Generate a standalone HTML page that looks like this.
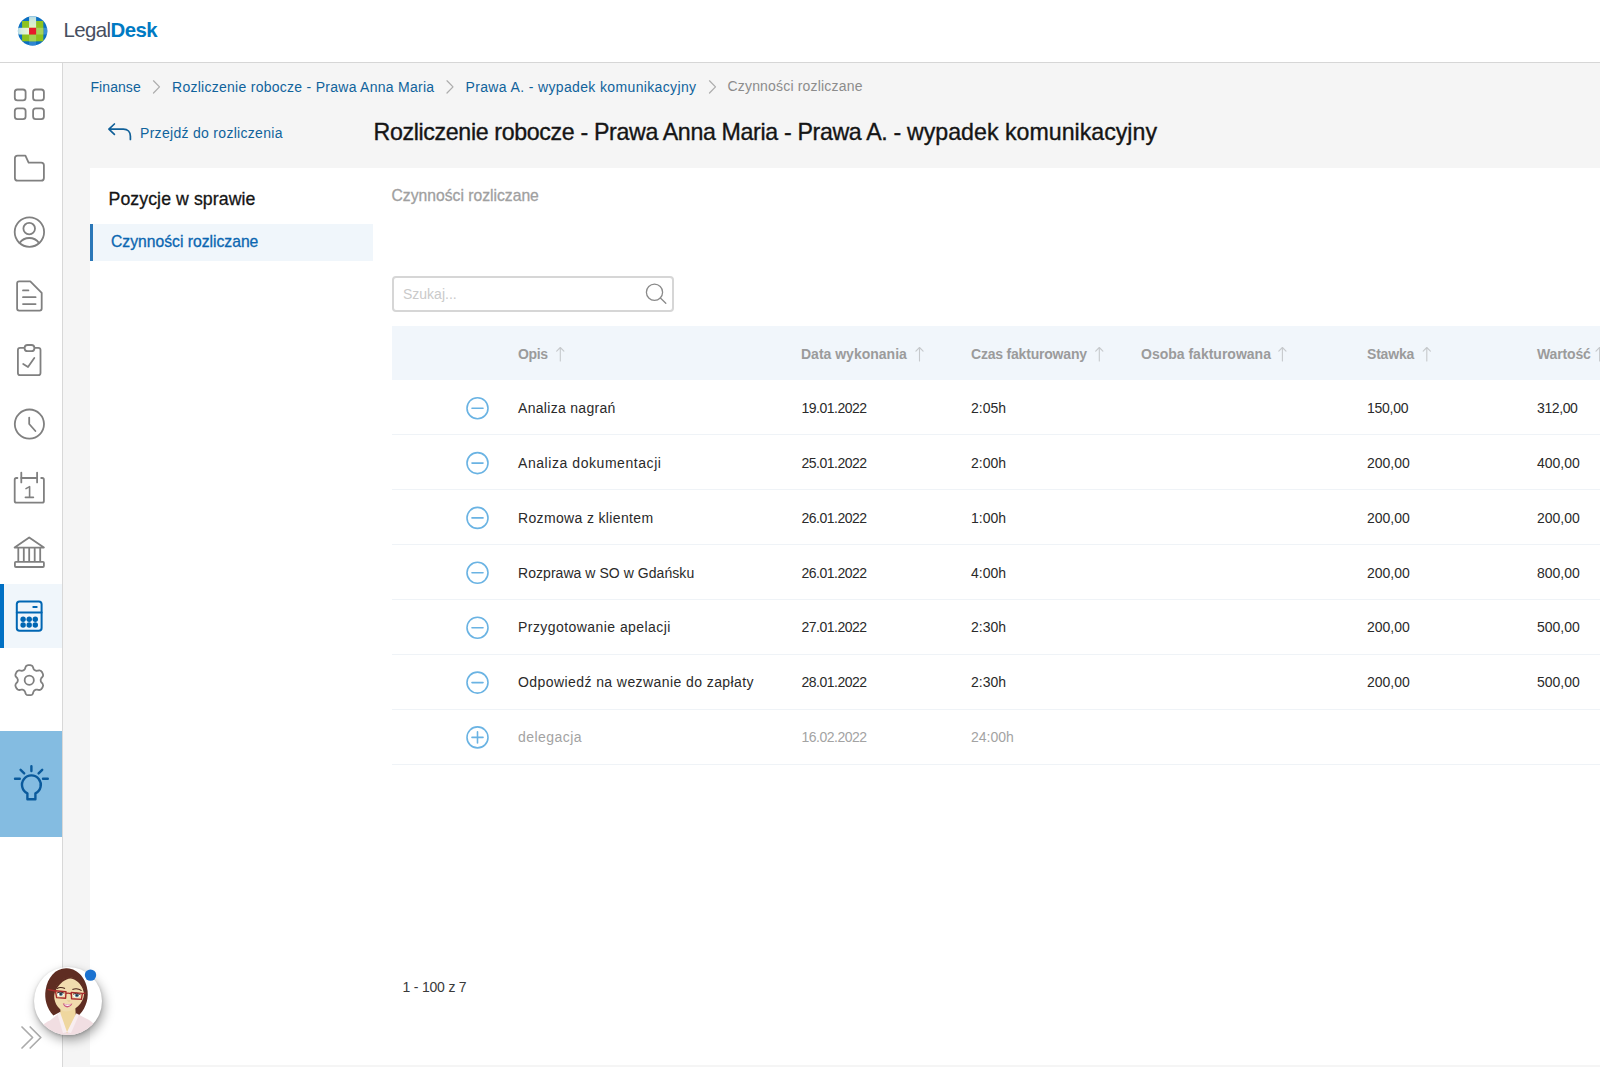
<!DOCTYPE html>
<html lang="pl">
<head>
<meta charset="utf-8">
<title>LegalDesk - Czynności rozliczane</title>
<style>
*{box-sizing:border-box;margin:0;padding:0}
html,body{width:1600px;height:1067px;overflow:hidden;background:#f5f5f5;font-family:"Liberation Sans",sans-serif;color:#232323}
.abs{position:absolute}
#t1{letter-spacing:-0.348px}#t2{letter-spacing:0}
#header{position:absolute;left:0;top:0;width:1600px;height:63px;background:#fff;border-bottom:1px solid #d6d6d6}
#logo-text{position:absolute;left:63.5px;top:16.5px;font-size:20.4px;line-height:26px;color:#474f5f;white-space:nowrap;letter-spacing:-0.57px}
#logo-text b{color:#007ac3;font-weight:bold}
#sidebar{position:absolute;left:0;top:63px;width:63px;height:1004px;background:#fff;border-right:1px solid #d8d8d8}
.nav-ic{position:absolute;left:0;width:61px;height:64px}
.nav-ic svg{position:absolute;left:0;top:0}
.nav-ic.active{background:#eef5fb;border-left:4px solid #0069b4}
#bulb{position:absolute;left:0;top:731px;width:62px;height:106px;background:#84bce1}
#crumbs{position:absolute;left:90px;top:77px;height:20px;font-size:14px;line-height:20px;color:#10639c;white-space:nowrap}
#crumbs span{position:absolute;top:0}
#crumbs .sep{color:#a0a0a0}
#crumbs .cur{color:#8c8c8c}
#back{position:absolute;left:140px;top:123px;font-size:14px;line-height:20px;letter-spacing:0.3px;color:#10639c;white-space:nowrap}
#title{position:absolute;left:373.5px;top:116px;font-size:23.2px;line-height:32px;color:#151515;white-space:nowrap;font-weight:normal;-webkit-text-stroke:0.35px #151515}
#panel{position:absolute;left:90px;top:168px;width:1510px;height:897px;background:#fff}
#side-h{position:absolute;left:18.5px;top:19px;font-size:17.7px;line-height:24px;letter-spacing:0.09px;color:#151515;white-space:nowrap;-webkit-text-stroke:0.3px #151515}
#side-item{position:absolute;left:0;top:56px;width:283px;height:37px;background:#f0f6fb;border-left:3px solid #2a77b8;color:#0b66b1;font-size:15.7px;line-height:36px;padding-left:18px;white-space:nowrap;-webkit-text-stroke:0.3px #0b66b1}
#sec-h{position:absolute;left:301.5px;top:17px;font-size:15.7px;line-height:22px;color:#a0a0a0;white-space:nowrap;-webkit-text-stroke:0.3px #a0a0a0}
#search{position:absolute;left:302px;top:108px;width:282px;height:36px;border:2px solid #d6d6d6;border-radius:4px;background:#fff}
#search span{position:absolute;left:9px;top:6px;font-size:14px;line-height:20px;color:#cacaca}
#thead{position:absolute;left:302px;top:158px;width:1208px;height:54px;background:#f1f6fb}
.th{position:absolute;top:18px;font-size:14px;line-height:20px;font-weight:bold;color:#9b9b9b;white-space:nowrap}
.row{position:absolute;left:302px;width:1208px;height:55px;border-bottom:1px solid #eff3f7}
.row span{position:absolute;top:18px;font-size:14px;line-height:20px;color:#2a2a2a;white-space:nowrap}
.row.dim span{color:#a3a3a3}
.row.up span{top:17px}
.c1{left:126px}.c2{left:409px}.c3{left:579px}.c4{left:749px}.c5{left:975px}.c6{left:1145px}
.row .c2{letter-spacing:-0.5px;left:409.5px}
.row svg{position:absolute;left:73px;top:15px}
#pager{position:absolute;left:312.5px;top:809px;font-size:14px;line-height:20px;letter-spacing:-0.2px;color:#3a3a3a;white-space:nowrap}
</style>
</head>
<body>
<div id="header">
  <svg class="abs" style="left:0;top:0" width="64" height="62" viewBox="0 0 64 62">
    <defs><clipPath id="lc"><circle cx="32.6" cy="30.9" r="14.7"/></clipPath>
    <linearGradient id="lgv" x1="0" y1="0" x2="0" y2="1"><stop offset="0" stop-color="#9fd0f2"/><stop offset="0.45" stop-color="#cfe9d8"/><stop offset="1" stop-color="#e4f3c4"/></linearGradient>
    <linearGradient id="lgh" x1="0" y1="0" x2="1" y2="0"><stop offset="0" stop-color="#9fd0f2"/><stop offset="0.4" stop-color="#d6ecdc"/><stop offset="1" stop-color="#eef6d6"/></linearGradient></defs>
    <g clip-path="url(#lc)">
      <rect x="16" y="14" width="34" height="34" fill="#0b6fc2"/>
      <rect x="43.3" y="27.8" width="6" height="6.7" fill="#3b8fd6"/>
      <rect x="29.1" y="41.3" width="7" height="6" fill="#2f86d2"/>
      <rect x="22.1" y="21" width="21.2" height="20.3" fill="#8dc21f"/>
      <rect x="29.1" y="14" width="7" height="13.8" fill="url(#lgv)"/>
      <rect x="16" y="27.8" width="13.1" height="6.7" fill="url(#lgh)"/>
      <rect x="36.1" y="27.8" width="7.2" height="6.7" fill="#a6d25c"/>
      <rect x="29.1" y="34.5" width="7" height="6.8" fill="#a2d456"/>
      <rect x="29.1" y="27.8" width="7" height="6.7" fill="#e81a2b"/>
    </g>
  </svg>
  <div id="logo-text"><span id="lg1">Legal</span><b id="lg2">Desk</b></div>
</div>

<div id="sidebar"></div>
<div class="abs" style="left:0;top:584px;width:62px;height:64px;background:#f0f6fb"></div>
<div class="abs" style="left:0;top:584px;width:4px;height:64px;background:#0070c4"></div>
<div id="bulb"></div>
<svg class="abs" style="left:0;top:63px" width="63" height="1004" viewBox="0 63 63 1004" fill="none" stroke="#808080" stroke-width="1.8" stroke-linecap="round" stroke-linejoin="round">
  <!-- dashboard -->
  <rect x="14.8" y="89.5" width="10.8" height="10.8" rx="2.6"/><rect x="33.1" y="89.5" width="10.8" height="10.8" rx="2.6"/>
  <rect x="14.8" y="108.3" width="10.8" height="10.8" rx="2.6"/><rect x="33.1" y="108.3" width="10.8" height="10.8" rx="2.6"/>
  <!-- folder -->
  <path d="M17.6 155.6H25.4L28.6 162.6H41.2Q43.9 162.6 43.9 165.3V177.9Q43.9 180.6 41.2 180.6H17.6Q14.9 180.6 14.9 177.9V158.3Q14.9 155.6 17.6 155.6Z"/>
  <!-- user -->
  <circle cx="29.4" cy="232.1" r="14.7"/><circle cx="29.2" cy="228.6" r="5.8"/>
  <path d="M19.6 243C22 239.6 25.4 238 29.3 238S36.6 239.6 39 243"/>
  <!-- document -->
  <path d="M19.1 281.3H30.3L41.7 292.8V308.6Q41.7 310.6 39.7 310.6H19.1Q17.1 310.6 17.1 308.6V283.3Q17.1 281.3 19.1 281.3Z"/>
  <path d="M23 290.4H28.4M23 297.2H35.6M23 304.1H35.6"/>
  <!-- clipboard -->
  <rect x="17.9" y="347.8" width="22.6" height="27.3" rx="2.2"/>
  <rect x="24.6" y="345" width="9.8" height="6.2" rx="3" fill="#fff"/>
  <path d="M23.2 364L28 367L34.3 358"/>
  <!-- clock -->
  <circle cx="29.4" cy="424.1" r="14.6"/><path d="M29.2 417.6V424L35.4 431"/>
  <!-- calendar -->
  <path d="M21.3 478H37.1M17.4 478H16.4Q14.7 478 14.7 479.7V501Q14.7 502.7 16.4 502.7H42.2Q43.9 502.7 43.9 501V479.7Q43.9 478 42.2 478H41.2"/>
  <path d="M21.3 472.6V482.4M37.1 472.6V482.4"/>
  <path d="M26 488.6L29.6 486.6V497.4M25.4 497.4H33.4" stroke-width="1.6"/>
  <!-- bank -->
  <path d="M14.6 547.6L29.2 537.4L43.9 547.6Z"/>
  <path d="M18.3 548.5V561M23.8 548.5V561M29.2 548.5V561M34.7 548.5V561M40.2 548.5V561"/>
  <rect x="14.9" y="561.8" width="29" height="5.2" rx="1"/>
  <!-- calculator (active) -->
  <g stroke="#0066b3" stroke-width="2">
    <rect x="16.8" y="601.5" width="24.8" height="29.3" rx="2.8"/>
    <path d="M16.8 612.6H41.6M33.3 607H36.7"/>
    <g fill="#0066b3" stroke="none">
      <circle cx="23.1" cy="619.2" r="2.7"/><circle cx="29.2" cy="619.2" r="2.7"/><circle cx="35.3" cy="619.2" r="2.7"/>
      <circle cx="23.1" cy="625" r="2.7"/><circle cx="29.2" cy="625" r="2.7"/><circle cx="35.3" cy="625" r="2.7"/>
    </g>
  </g>
  <!-- settings -->
  <circle cx="29.25" cy="680.2" r="4.6"/>
  <path d="M29.2 665.2 L29.6 665.2 L30.0 665.2 L30.4 665.2 L30.8 665.3 L31.2 665.4 L31.6 665.5 L31.9 665.7 L32.3 666.0 L32.6 666.4 L32.8 666.8 L33.1 667.4 L33.2 667.9 L33.4 668.4 L33.6 668.9 L33.8 669.2 L34.0 669.5 L34.2 669.8 L34.5 670.0 L34.7 670.1 L35.0 670.3 L35.2 670.4 L35.5 670.6 L35.8 670.7 L36.1 670.7 L36.5 670.8 L36.9 670.8 L37.4 670.7 L37.9 670.6 L38.5 670.5 L39.0 670.4 L39.6 670.4 L40.0 670.5 L40.4 670.7 L40.8 670.9 L41.1 671.1 L41.4 671.4 L41.6 671.7 L41.9 672.0 L42.1 672.3 L42.3 672.7 L42.5 673.0 L42.6 673.4 L42.8 673.7 L42.9 674.1 L43.0 674.5 L43.1 674.9 L43.1 675.3 L43.0 675.7 L42.9 676.2 L42.6 676.6 L42.3 677.1 L41.9 677.5 L41.5 677.9 L41.2 678.3 L41.0 678.6 L40.9 679.0 L40.8 679.3 L40.7 679.6 L40.7 679.9 L40.7 680.2 L40.7 680.5 L40.7 680.8 L40.8 681.1 L40.9 681.4 L41.0 681.8 L41.2 682.1 L41.5 682.5 L41.9 682.9 L42.3 683.3 L42.6 683.8 L42.9 684.2 L43.0 684.7 L43.1 685.1 L43.1 685.5 L43.0 685.9 L42.9 686.3 L42.8 686.7 L42.6 687.0 L42.5 687.4 L42.3 687.7 L42.1 688.1 L41.9 688.4 L41.6 688.7 L41.4 689.0 L41.1 689.3 L40.8 689.5 L40.4 689.7 L40.0 689.9 L39.6 690.0 L39.0 690.0 L38.5 689.9 L37.9 689.8 L37.4 689.7 L36.9 689.6 L36.5 689.6 L36.1 689.7 L35.8 689.7 L35.5 689.8 L35.2 690.0 L35.0 690.1 L34.7 690.3 L34.5 690.4 L34.2 690.6 L34.0 690.9 L33.8 691.2 L33.6 691.5 L33.4 692.0 L33.2 692.5 L33.1 693.0 L32.8 693.6 L32.6 694.0 L32.3 694.4 L31.9 694.7 L31.6 694.9 L31.2 695.0 L30.8 695.1 L30.4 695.2 L30.0 695.2 L29.6 695.2 L29.3 695.2 L28.9 695.2 L28.5 695.2 L28.1 695.2 L27.7 695.1 L27.3 695.0 L26.9 694.9 L26.6 694.7 L26.2 694.4 L25.9 694.0 L25.7 693.6 L25.4 693.0 L25.3 692.5 L25.1 692.0 L24.9 691.5 L24.7 691.2 L24.5 690.9 L24.3 690.6 L24.0 690.4 L23.8 690.3 L23.5 690.1 L23.3 690.0 L23.0 689.8 L22.7 689.7 L22.4 689.7 L22.0 689.6 L21.6 689.6 L21.1 689.7 L20.6 689.8 L20.0 689.9 L19.5 690.0 L18.9 690.0 L18.5 689.9 L18.1 689.7 L17.7 689.5 L17.4 689.3 L17.1 689.0 L16.9 688.7 L16.6 688.4 L16.4 688.1 L16.2 687.7 L16.0 687.4 L15.9 687.0 L15.7 686.7 L15.6 686.3 L15.5 685.9 L15.4 685.5 L15.4 685.1 L15.5 684.7 L15.6 684.2 L15.9 683.8 L16.2 683.3 L16.6 682.9 L17.0 682.5 L17.3 682.1 L17.5 681.8 L17.6 681.4 L17.7 681.1 L17.8 680.8 L17.8 680.5 L17.8 680.2 L17.8 679.9 L17.8 679.6 L17.7 679.3 L17.6 679.0 L17.5 678.6 L17.3 678.3 L17.0 677.9 L16.6 677.5 L16.2 677.1 L15.9 676.6 L15.6 676.2 L15.5 675.7 L15.4 675.3 L15.4 674.9 L15.5 674.5 L15.6 674.1 L15.7 673.7 L15.9 673.4 L16.0 673.0 L16.2 672.7 L16.4 672.3 L16.6 672.0 L16.9 671.7 L17.1 671.4 L17.4 671.1 L17.7 670.9 L18.1 670.7 L18.5 670.5 L18.9 670.4 L19.5 670.4 L20.0 670.5 L20.6 670.6 L21.1 670.7 L21.6 670.8 L22.0 670.8 L22.4 670.7 L22.7 670.7 L23.0 670.6 L23.3 670.4 L23.5 670.3 L23.8 670.1 L24.0 670.0 L24.3 669.8 L24.5 669.5 L24.7 669.2 L24.9 668.9 L25.1 668.4 L25.3 667.9 L25.4 667.4 L25.7 666.8 L25.9 666.4 L26.2 666.0 L26.6 665.7 L26.9 665.5 L27.3 665.4 L27.7 665.3 L28.1 665.2 L28.5 665.2 L28.9 665.2Z"/>
  <!-- bulb -->
  <g stroke="#0a5a9c" stroke-width="2.4">
    <path d="M27.4 793.3A9.4 9.4 0 1 1 35.4 793.3V799.2H27.4Z"/>
    <path d="M31.4 766.2V771M15 778.7H19.8M43 778.7H47.8M20.6 769.8L24.2 773.4M42.2 769.8L38.6 773.4"/>
  </g>
  <!-- expand chevrons -->
  <path d="M22 1027L32.6 1037.5L22 1048M30.2 1027L40.8 1037.5L30.2 1048" stroke="#ababab" stroke-width="1.7"/>
</svg>

<svg class="abs" style="left:63px;top:63px;z-index:5;pointer-events:none" width="1537" height="1004" viewBox="63 63 1537 1004" fill="none" stroke-linecap="round" stroke-linejoin="round">
  <g stroke="#adadad" stroke-width="1.25"><path d="M153.5 80.8L159.5 86.9L153.5 93"/><path d="M447 80.8L453 86.9L447 93"/><path d="M709.5 80.8L715.5 86.9L709.5 93"/></g>
  <path d="M114.4 124L108.9 129.1L114.4 134.3M108.9 129.1H123.4C127.6 129.1 130.4 132 130.4 136.2V139.5" stroke="#0f5f98" stroke-width="1.7"/>
  <g stroke="#8a8a8a" stroke-width="1.3"><circle cx="654.5" cy="292.3" r="8.1"/><path d="M660.4 298L665.8 303.2"/></g>
  <g stroke="#c6c9cc" stroke-width="1.1"><path d="M560.3 361V347.5M556.69 351.2L560.3 347.5L563.9 351.2"/><path d="M919.5 361V347.5M915.9 351.2L919.5 347.5L923.1 351.2"/><path d="M1099.3 361V347.5M1095.7 351.2L1099.3 347.5L1102.89 351.2"/><path d="M1282.4 361V347.5M1278.80 351.2L1282.4 347.5L1286.0 351.2"/><path d="M1426.8 361V347.5M1423.2 351.2L1426.8 347.5L1430.39 351.2"/><path d="M1599.6 361V347.5M1596 351.2L1599.6 347.5L1603.2 351.2"/></g>
  <g stroke="#6ab3e3" stroke-width="1.6"><circle cx="477.5" cy="408.2" r="10.5"/><path d="M472 408.2H483"/><circle cx="477.5" cy="463.1" r="10.5"/><path d="M472 463.1H483"/><circle cx="477.5" cy="517.9" r="10.5"/><path d="M472 517.9H483"/><circle cx="477.5" cy="572.8" r="10.5"/><path d="M472 572.8H483"/><circle cx="477.5" cy="627.7" r="10.5"/><path d="M472 627.7H483"/><circle cx="477.5" cy="682.6" r="10.5"/><path d="M472 682.6H483"/><circle cx="477.5" cy="737.4" r="10.5"/><path d="M472 737.4H483"/><path d="M477.5 731.9V742.9"/></g>
</svg>
<div class="abs" style="left:34px;top:967px;width:68px;height:68px;border-radius:50%;background:#fff;box-shadow:2px 5px 11px rgba(0,0,0,0.36),0 1px 3px rgba(0,0,0,0.18);z-index:6"></div>
<svg class="abs" style="left:30px;top:960px;z-index:7" width="80" height="90" viewBox="30 960 80 90">
  <defs><clipPath id="avc"><circle cx="68" cy="1001" r="34"/></clipPath></defs>
  <g clip-path="url(#avc)">
    <!-- hair back -->
    <path d="M67 968.2C56 967.6 47.6 977 45.6 990C44.2 999 46.6 1008 53.4 1015.6L60 1012L77 1017.2C84.6 1010.6 88.6 1001 87.6 991C86.6 979.6 78.6 968.8 67 968.2Z" fill="#5f2d22"/>
    <!-- shirt -->
    <path d="M36 1040C37 1030 42 1024 50 1020.6L60 1012.4L67 1031.8L76.4 1013.2L86 1018.6C93 1021.4 98 1027 100 1040Z" fill="#f1dee2"/>
    <!-- neck -->
    <path d="M60.6 1006L60.2 1014.6L67 1033.4L75.8 1015L75 1004Z" fill="#efd79f"/>
    <path d="M60.3 1013L67 1032L63 1033L57.6 1014.6Z" fill="#f8eef0"/>
    <path d="M76 1014L67 1032L71 1033L78.8 1015.2Z" fill="#f8eef0"/>
    <!-- face -->
    <path d="M69.4 977.6C61 977.8 54.6 985.6 54.2 996C54 1003.6 59.4 1011.4 66.4 1011.6C74.6 1011.4 83.4 1003.4 84 994.6C84.4 985.6 77.6 977.6 69.4 977.6Z" fill="#f1dcae"/>
    <!-- hair fringe -->
    <path d="M70 977C62.6 976.6 55 982.6 53.4 995.4C55.4 989.6 58.6 985 62.6 981.8C65.4 979.6 68 978.6 70.4 978.4C74.6 978.8 79 981.8 81.4 986.2C82.8 988.6 83.8 991.2 84.4 994.4C85.2 986 79 977.4 70 977Z" fill="#5f2d22"/>
    <!-- brows -->
    <path d="M56.6 988.8Q60.4 986.2 65 988.6" stroke="#4a2219" stroke-width="1.1" fill="none"/>
    <path d="M72.4 989.6Q77 987.6 81.6 990.6" stroke="#4a2219" stroke-width="1.1" fill="none"/>
    <!-- eyes -->
    <ellipse cx="60.6" cy="994" rx="3.3" ry="2.3" fill="#fff"/><circle cx="60.9" cy="994" r="2" fill="#5d8195"/><circle cx="60.9" cy="994" r="0.9" fill="#1d2730"/>
    <ellipse cx="76.6" cy="995.2" rx="3.3" ry="2.3" fill="#fff"/><circle cx="76.9" cy="995.2" r="2" fill="#5d8195"/><circle cx="76.9" cy="995.2" r="0.9" fill="#1d2730"/>
    <path d="M57 993Q60.6 990.6 64.2 993.2" stroke="#2b1712" stroke-width="0.9" fill="none"/>
    <path d="M73 994.2Q76.8 991.8 80.4 994.6" stroke="#2b1712" stroke-width="0.9" fill="none"/>
    <!-- glasses -->
    <g stroke="#a82b2b" stroke-width="1.4" fill="none" stroke-linejoin="round">
      <path d="M55.4 990.8L66 991.8L65.6 998.2L56.6 997.6Z"/>
      <path d="M71.2 992.4L82.4 993.4L81.4 999.4L71.6 998.8Z"/>
      <path d="M66 993.4Q68.6 992.6 71.2 993.8"/>
      <path d="M55.4 991L47.6 989.4M82.4 993.6L85.6 993"/>
    </g>
    <!-- nose -->
    <path d="M67.6 1000.6Q68.8 1001.6 70.2 1000.8" stroke="#d9b983" stroke-width="0.7" fill="none"/>
    <!-- mouth -->
    <path d="M62.8 1003.2Q67.6 1005 72.4 1003.6Q70.6 1007.4 67.2 1007.4Q64 1007.2 62.8 1003.2Z" fill="#c9577f"/>
    <path d="M64 1003.9Q67.6 1005.2 71.2 1004.1Q69.8 1006 67.4 1006Q65.2 1005.9 64 1003.9Z" fill="#fff"/>
  </g>
  <circle cx="90.5" cy="975.1" r="5.7" fill="#1b72d0"/>
</svg>
<div id="crumbs">
  <span style="left:0.5px;letter-spacing:0.07px">Finanse</span>
  <span style="left:82px;letter-spacing:0.27px">Rozliczenie robocze - Prawa Anna Maria</span>
  <span style="left:375.5px;letter-spacing:0.36px">Prawa A. - wypadek komunikacyjny</span>
  <span class="cur" style="left:637.5px;top:-1px;letter-spacing:0.18px">Czynności rozliczane</span>
</div>
<div id="back">Przejdź do rozliczenia</div>
<h1 id="title"><span id="t1">Rozliczenie robocze - Prawa Anna Maria - Prawa A. - </span><span id="t2">wypadek komunikacyjny</span></h1>

<div id="panel">
  <div id="side-h">Pozycje w sprawie</div>
  <div id="side-item">Czynności rozliczane</div>
  <div id="sec-h">Czynności rozliczane</div>
  <div id="search"><span>Szukaj...</span></div>
  <div id="thead">
    <div class="th c1" style="letter-spacing:-0.4px">Opis</div>
    <div class="th c2">Data wykonania</div>
    <div class="th c3" style="letter-spacing:-0.2px">Czas fakturowany</div>
    <div class="th c4">Osoba fakturowana</div>
    <div class="th c5" style="letter-spacing:-0.2px">Stawka</div>
    <div class="th c6" style="letter-spacing:-0.15px">Wartość</div>
  </div>
  <div class="row" style="top:212px"><span class="c1" style="letter-spacing:0.30px">Analiza nagrań</span><span class="c2">19.01.2022</span><span class="c3">2:05h</span><span class="c5" style="letter-spacing:-0.25px">150,00</span><span class="c6" style="letter-spacing:-0.4px">312,00</span></div>
  <div class="row" style="top:267px"><span class="c1" style="letter-spacing:0.56px">Analiza dokumentacji</span><span class="c2">25.01.2022</span><span class="c3">2:00h</span><span class="c5">200,00</span><span class="c6">400,00</span></div>
  <div class="row" style="top:322px"><span class="c1" style="letter-spacing:0.35px">Rozmowa z klientem</span><span class="c2">26.01.2022</span><span class="c3">1:00h</span><span class="c5">200,00</span><span class="c6">200,00</span></div>
  <div class="row" style="top:377px"><span class="c1" style="letter-spacing:0.05px">Rozprawa w SO w Gdańsku</span><span class="c2">26.01.2022</span><span class="c3">4:00h</span><span class="c5">200,00</span><span class="c6">800,00</span></div>
  <div class="row up" style="top:432px"><span class="c1" style="letter-spacing:0.44px">Przygotowanie apelacji</span><span class="c2">27.01.2022</span><span class="c3">2:30h</span><span class="c5">200,00</span><span class="c6">500,00</span></div>
  <div class="row up" style="top:487px"><span class="c1" style="letter-spacing:0.42px">Odpowiedź na wezwanie do zapłaty</span><span class="c2">28.01.2022</span><span class="c3">2:30h</span><span class="c5">200,00</span><span class="c6">500,00</span></div>
  <div class="row dim up" style="top:542px"><span class="c1" style="letter-spacing:0.46px">delegacja</span><span class="c2">16.02.2022</span><span class="c3">24:00h</span></div>
  <div id="pager">1 - 100 z 7</div>
</div>
</body>
</html>
